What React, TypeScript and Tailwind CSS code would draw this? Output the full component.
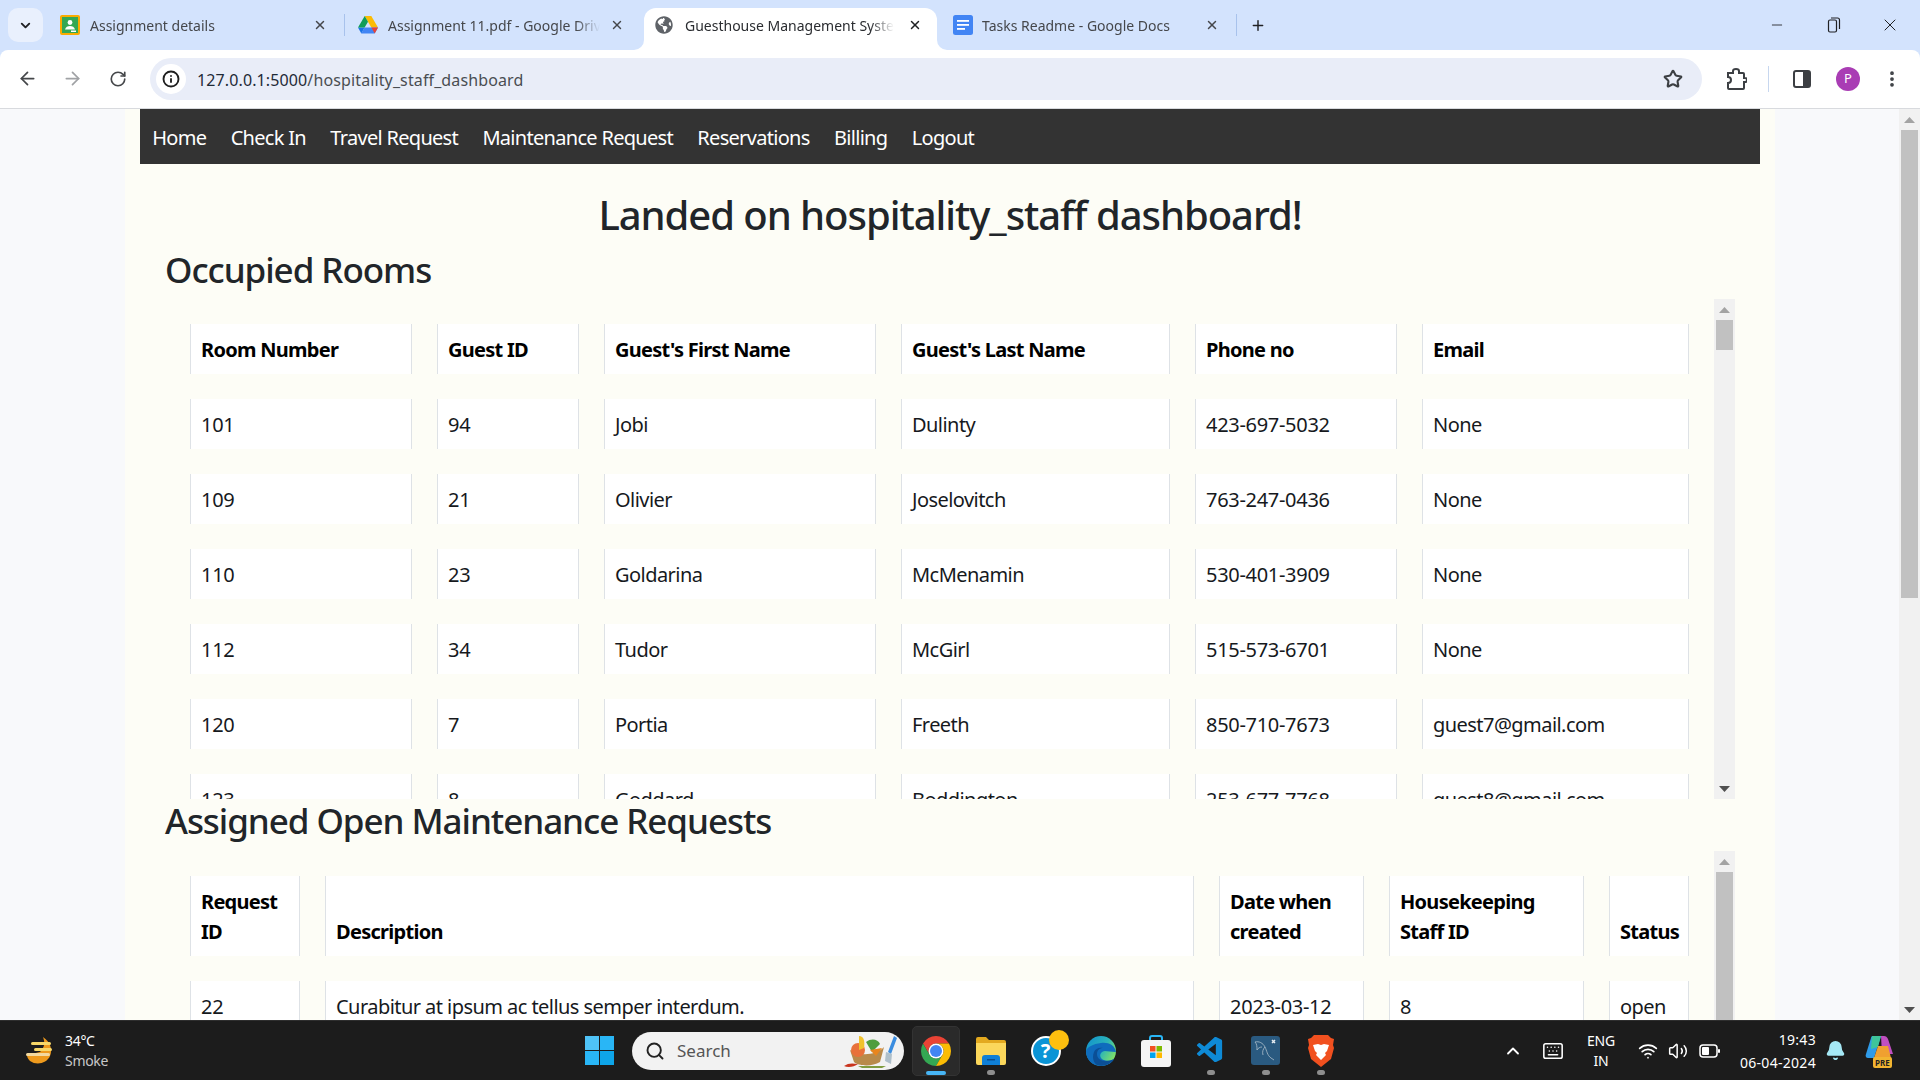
import React from 'react';
import { ArrowLeft, ArrowRight, RotateCw, Star, X, Plus, Minus, ChevronDown, ChevronUp, Search, Info, EllipsisVertical, Wifi, Volume2, Bell, Keyboard } from 'lucide-react';
import { FaGlobeAmericas } from 'react-icons/fa';
import { VscVscode } from 'react-icons/vsc';

const navItems = ['Home', 'Check In', 'Travel Request', 'Maintenance Request', 'Reservations', 'Billing', 'Logout'];

const occupiedHead = ['Room Number', 'Guest ID', "Guest's First Name", "Guest's Last Name", 'Phone no', 'Email'];
const occupiedRows = [
  ['101', '94', 'Jobi', 'Dulinty', '423-697-5032', 'None'],
  ['109', '21', 'Olivier', 'Joselovitch', '763-247-0436', 'None'],
  ['110', '23', 'Goldarina', 'McMenamin', '530-401-3909', 'None'],
  ['112', '34', 'Tudor', 'McGirl', '515-573-6701', 'None'],
  ['120', '7', 'Portia', 'Freeth', '850-710-7673', 'guest7@gmail.com'],
  ['123', '8', 'Goddard', 'Boddington', '253-677-7768', 'guest8@gmail.com'],
];

const requestHead = ['Request ID', 'Description', 'Date when created', 'Housekeeping Staff ID', 'Status'];
const requestRows = [['22', 'Curabitur at ipsum ac tellus semper interdum.', '2023-03-12', '8', 'open']];

function ChromeLogo({ size }: { size: number }) {
  return (
    <svg width={size} height={size} viewBox="4 4 40 40">
      <path d="M41.32 14A20 20 0 0 0 6.68 14L15.34 29A10 10 0 0 1 24 14Z" fill="#ea4335" />
      <path d="M6.68 14A20 20 0 0 0 24 44L32.66 29A10 10 0 0 1 15.34 29Z" fill="#34a853" />
      <path d="M24 44A20 20 0 0 0 41.32 14L24 14A10 10 0 0 1 32.66 29Z" fill="#fbbc04" />
      <circle cx="24" cy="24" r="10" fill="#fff" />
      <circle cx="24" cy="24" r="8" fill="#4285f4" />
    </svg>
  );
}

function ClassroomIcon() {
  return (
    <svg width="20" height="20" viewBox="0 0 20 20">
      <rect x="0" y="0" width="20" height="20" rx="2" fill="#f9ab00" />
      <rect x="2" y="2" width="16" height="16" fill="#34a853" />
      <circle cx="10" cy="7.5" r="2.4" fill="#fff" />
      <path d="M5 14.5c.6-2.6 2.6-3.6 5-3.6s4.4 1 5 3.6z" fill="#fff" />
      <rect x="11" y="15.5" width="5" height="1.5" fill="#fff" />
    </svg>
  );
}

function DriveIcon() {
  return (
    <svg width="20" height="18" viewBox="0 0 20 18">
      <polygon points="13.3,0 20,11.5 13.3,11.5 6.7,0" fill="#fbbc04" />
      <polygon points="3.3,17.5 16.7,17.5 20,11.5 6.6,11.5" fill="#4285f4" />
      <polygon points="6.6,11.5 0,11.5 3.3,17.5" fill="#1a73e8" />
      <polygon points="0,11.5 6.7,0 10,5.8 6.6,11.5" fill="#0f9d58" />
      <polygon points="13.4,11.5 20,11.5 16.7,17.5" fill="#ea4335" />
    </svg>
  );
}

function DocsIcon() {
  return (
    <svg width="20" height="20" viewBox="0 0 20 20">
      <rect x="0" y="0" width="20" height="20" rx="2.5" fill="#4285f4" />
      <rect x="4" y="5" width="12" height="1.8" fill="#fff" />
      <rect x="4" y="9" width="12" height="1.8" fill="#fff" />
      <rect x="4" y="13" width="8" height="1.8" fill="#fff" />
    </svg>
  );
}

function TabLabel({ text, active }: { text: string; active?: boolean }) {
  return (
    <span className={`flex-1 overflow-hidden whitespace-nowrap text-[14px] [mask-image:linear-gradient(to_left,transparent,black_24px)] ${active ? 'text-[#2a2c30]' : 'text-[#45474b]'}`}>
      {text}
    </span>
  );
}

function ChromeTabs() {
  return (
    <div className="flex h-[50px] items-end bg-[#d3e3fd]">
      <div className="mb-[8px] ml-[8px] flex h-[34px] w-[35px] items-center justify-center rounded-[10px] bg-[#e9f0fd]">
        <ChevronDown size={15} strokeWidth={3} className="text-[#202124]" />
      </div>
      <div className="flex h-[42px] w-[301px] items-center pb-[8px] pl-[17px] pr-[17px]">
        <ClassroomIcon />
        <span className="w-[10px]" />
        <TabLabel text="Assignment details" />
        <X size={14} strokeWidth={2.5} className="text-[#45474b]" />
      </div>
      <div className="mb-[14px] h-[22px] w-[1px] bg-[#a8c2ec]" />
      <div className="flex h-[42px] w-[299px] items-center pb-[8px] pl-[13px] pr-[20px]">
        <DriveIcon />
        <span className="w-[10px]" />
        <TabLabel text="Assignment 11.pdf - Google Drive" />
        <X size={14} strokeWidth={2.5} className="ml-[10px] text-[#45474b]" />
      </div>
      <div className="relative flex h-[42px] w-[293px] items-center rounded-t-[12px] bg-white pb-[8px] pl-[11px] pr-[15px]">
        <span className="absolute bottom-0 left-[-10px] h-[10px] w-[10px] bg-white">
          <span className="block h-full w-full rounded-br-[10px] bg-[#d3e3fd]" />
        </span>
        <FaGlobeAmericas size={18} className="text-[#5f6368]" />
        <span className="w-[12px]" />
        <TabLabel text="Guesthouse Management System" active />
        <X size={14} strokeWidth={2.5} className="ml-[14px] text-[#202124]" />
        <span className="absolute bottom-0 right-[-10px] h-[10px] w-[10px] bg-white">
          <span className="block h-full w-full rounded-bl-[10px] bg-[#d3e3fd]" />
        </span>
      </div>
      <div className="flex h-[42px] w-[299px] items-center pb-[8px] pl-[16px] pr-[17px]">
        <DocsIcon />
        <span className="w-[9px]" />
        <TabLabel text="Tasks Readme - Google Docs" />
        <X size={14} strokeWidth={2.5} className="text-[#45474b]" />
      </div>
      <div className="mb-[14px] h-[22px] w-[1px] bg-[#a8c2ec]" />
      <div className="mb-[16px] ml-[13px] flex h-[18px] w-[16px] items-center justify-center">
        <Plus size={17} strokeWidth={2.2} className="text-[#202124]" />
      </div>
      <div className="ml-auto flex h-[50px] items-center self-start">
        <div className="flex w-[56px] justify-center">
          <Minus size={16} strokeWidth={1.3} className="text-[#202124]" />
        </div>
        <div className="flex w-[57px] justify-center">
          <svg width="14" height="16" viewBox="0 0 14 16" fill="none" stroke="#202124" strokeWidth="1.2">
            <rect x="1.5" y="3" width="8" height="12" rx="1.5" />
            <path d="M4 1h6.5a2 2 0 0 1 2 2v9" />
          </svg>
        </div>
        <div className="flex w-[58px] justify-center pr-[2px]">
          <X size={20} strokeWidth={1.2} className="text-[#202124]" />
        </div>
      </div>
    </div>
  );
}

function ExtensionIcon() {
  return (
    <svg width="22" height="24" viewBox="0 0 22 24" fill="none" stroke="#3c3f43" strokeWidth="2" className="ml-[23px]">
      <path d="M3 6h5V4a3 2 0 0 1 6 0v2h4a1 1 0 0 1 1 1v4h1a1.5 1.5 0 0 1 0 4h-1v6a1 1 0 0 1-1 1H4a1 1 0 0 1-1-1v-5a3 3 0 0 0 0-6z" />
    </svg>
  );
}

function Toolbar() {
  return (
    <div className="flex h-[59px] items-center rounded-t-[8px] border-b border-[#d8dade] bg-white pb-[1px]">
      <ArrowLeft size={21} strokeWidth={2} className="ml-[17px] text-[#45474a]" />
      <ArrowRight size={21} strokeWidth={2} className="ml-[24px] text-[#a0a2a5]" />
      <RotateCw size={18} strokeWidth={2.2} className="ml-[26px] text-[#45474a]" />
      <div className="ml-[23px] flex h-[42px] w-[1552px] items-center rounded-full bg-[#e9edf8]">
        <div className="ml-[6px] flex h-[30px] w-[30px] items-center justify-center rounded-full bg-white">
          <Info size={18} strokeWidth={2.5} className="text-[#1f1f1f]" />
        </div>
        <span className="ml-[11px] pt-[2px] text-[16px] tracking-[0.12px] text-[#1f2a37]">
          127.0.0.1:5000<span className="text-[#4a4d52]">/hospitality_staff_dashboard</span>
        </span>
        <Star size={20} strokeWidth={2.5} className="ml-auto mr-[19px] text-[#3c3f43]" />
      </div>
      <ExtensionIcon />
      <div className="ml-[21px] h-[26px] w-[1px] bg-[#c7d7ef]" />
      <svg width="18" height="18" viewBox="0 0 18 18" className="ml-[24px]">
        <rect x="1" y="1" width="16" height="16" rx="2" fill="none" stroke="#3c3f43" strokeWidth="2" />
        <rect x="10" y="1" width="7" height="16" fill="#3c3f43" />
      </svg>
      <div className="ml-[25px] flex h-[24px] w-[24px] items-center justify-center rounded-full bg-[#a93db4] text-[13px] text-white">P</div>
      <EllipsisVertical size={20} strokeWidth={2.5} className="ml-[22px] text-[#3c3f43]" />
    </div>
  );
}

function ScrollArrow({ up, dark }: { up?: boolean; dark?: boolean }) {
  return (
    <svg width="11" height="6" viewBox="0 0 11 6" className={dark ? 'text-[#505050]' : 'text-[#a3a3a3]'}>
      <polygon points={up ? '5.5,0 11,6 0,6' : '0,0 11,0 5.5,6'} fill="currentColor" />
    </svg>
  );
}

function Scrollbar({ thumb }: { thumb: string }) {
  return (
    <div className="flex h-full w-[21px] shrink-0 flex-col items-center bg-[#f1f1f1]">
      <div className="flex h-[21px] items-center justify-center">
        <ScrollArrow up />
      </div>
      <div className={`w-[17px] bg-[#c1c1c1] ${thumb}`} />
      <div className="mt-auto flex h-[21px] items-center justify-center">
        <ScrollArrow dark />
      </div>
    </div>
  );
}

function DataTable({ head, rows, widths }: { head: string[]; rows: string[][]; widths: string[] }) {
  return (
    <table className="w-[1549px] shrink-0 self-start table-fixed border-separate border-spacing-[25px] text-[20px] leading-[30px] text-[#16191d]">
      <colgroup>
        {widths.map((w) => (
          <col key={w} className={w} />
        ))}
      </colgroup>
      <thead>
        <tr>
          {head.map((h) => (
            <th key={h} className="border-x border-[#dee2e6] bg-white px-[10px] pb-[9px] pt-[11px] text-left align-bottom font-bold tracking-[-0.72px] text-black">
              {h}
            </th>
          ))}
        </tr>
      </thead>
      <tbody>
        {rows.map((row) => (
          <tr key={row[0]}>
            {row.map((c, i) => (
              <td
                key={i}
                className={`border-x border-[#dee2e6] bg-white px-[10px] pb-[9px] pt-[11px] ${/^[\d-]+$/.test(c) ? 'tracking-[-0.3px]' : 'tracking-[-0.55px]'}`}
              >
                {c}
              </td>
            ))}
          </tr>
        ))}
      </tbody>
    </table>
  );
}

function PageContent() {
  return (
    <div className="flex min-w-0 flex-1 overflow-hidden bg-[#f8f9fb]">
      <div className="ml-[125px] h-full w-[1650px] overflow-hidden bg-[#fdfdf6] px-[15px]">
        <nav className="flex h-[55px] bg-[#333333]">
          {navItems.map((item) => (
            <a key={item} className="px-[12.2px] pb-[11.5px] pt-[13.5px] text-[20px] leading-[30px] tracking-[-0.7px] text-white">
              {item}
            </a>
          ))}
        </nav>
        <h1 className="mb-[9px] mt-[27px] text-center text-[40px] font-medium leading-[48px] tracking-[-1.05px] text-[#212529]">
          Landed on hospitality_staff dashboard!
        </h1>
        <div className="px-[25px]">
          <h2 className="mb-[8px] text-[35px] font-medium leading-[43px] tracking-[-1.05px] text-[#212529]">Occupied Rooms</h2>
          <div className="flex h-[500px] w-[1570px] overflow-hidden">
            <DataTable
              head={occupiedHead}
              rows={occupiedRows}
              widths={['w-[222px]', 'w-[142px]', 'w-[272px]', 'w-[269px]', 'w-[202px]', 'w-[267px]']}
            />
            <Scrollbar thumb="h-[30px]" />
          </div>
          <h2 className="mb-[9px] text-[35px] font-medium leading-[43px] tracking-[-1.05px] text-[#212529]">Assigned Open Maintenance Requests</h2>
          <div className="flex h-[500px] w-[1570px] overflow-hidden">
            <DataTable
              head={requestHead}
              rows={requestRows}
              widths={['w-[110px]', 'w-[869px]', 'w-[145px]', 'w-[195px]', 'w-[80px]']}
            />
            <Scrollbar thumb="h-[300px]" />
          </div>
        </div>
      </div>
    </div>
  );
}

function WeatherIcon() {
  return (
    <svg width="30" height="30" viewBox="0 0 30 30">
      <path d="M18 1C25 6 28 13 25 20 22 27 12 30 5 25 3 23 2 21 2 19L15 16C20 11 20 6 18 1Z" fill="#ee9a1d" />
      <rect x="6" y="6" width="20" height="3" rx="1.5" fill="#f7d768" />
      <rect x="9" y="12" width="18" height="3" rx="1.5" fill="#f7d768" />
      <rect x="1" y="17" width="24" height="3" rx="1.5" fill="#f3d9a0" />
    </svg>
  );
}

function WindowsLogo() {
  return (
    <svg width="29" height="29" viewBox="0 0 29 29">
      <rect x="0" y="0" width="14" height="14" fill="#4fc3f7" />
      <rect x="15" y="0" width="14" height="14" fill="#29b6f6" />
      <rect x="0" y="15" width="14" height="14" fill="#29b6f6" />
      <rect x="15" y="15" width="14" height="14" fill="#0ea5e9" />
    </svg>
  );
}

function BasketPicture() {
  return (
    <svg width="62" height="38" viewBox="0 0 62 38">
      <path d="M8 18C16 24 34 24 42 15L38 30C30 35 16 34 12 30Z" fill="#b88a4a" />
      <circle cx="16" cy="18" r="7" fill="#e8713a" />
      <path d="M17 4c5 0 6 5 5 12l-5 2z" fill="#f0c22c" />
      <path d="M24 10c5-4 12-3 14 2l-8 8z" fill="#4f9e3f" />
      <path d="M28 18l12-2-6 8z" fill="#e8851e" />
      <path d="M52 4l3 2-6 16-3-2z" fill="#3b8de0" />
      <path d="M44 20l6 2-1 10-6-3z" fill="#aebfca" />
      <path d="M2 34c4-3 8-3 14-2-4 3-10 4-14 2z" fill="#c9351f" />
      <path d="M16 34h28l-4 2H20z" fill="#7f9b3d" />
    </svg>
  );
}

function HelpIcon() {
  return (
    <div className="relative flex h-[30px] w-[30px] items-center justify-center rounded-full border-2 border-white bg-[#0a94d6] text-[20px] font-bold leading-none text-white">
      ?
      <span className="absolute right-[-10px] top-[-8px] h-[20px] w-[20px] rounded-full bg-[#fdbf0f]" />
    </div>
  );
}

function EdgeIcon() {
  return (
    <svg width="30" height="30" viewBox="0 0 30 30">
      <defs>
        <linearGradient id="edgeTop" x1="0" y1="0" x2="1" y2="0.6">
          <stop offset="0" stopColor="#0f8fd1" />
          <stop offset="0.6" stopColor="#2bb4b8" />
          <stop offset="1" stopColor="#7de06a" />
        </linearGradient>
      </defs>
      <circle cx="15" cy="15" r="15" fill="url(#edgeTop)" />
      <path d="M0 15C0 24 7 30 15 30c6 0 11-3 13-7-5 3-11 2-13-1-2-3 0-7 4-7 3 0 6 1 11 1C29 9 22 6 15 7 7 8 1 11 0 15Z" fill="#0f6cbd" />
      <path d="M11 29c-4-3-5-8-3-13 1-3 5-5 9-4-3 0-6 2-6 6 0 4 3 7 9 7 3 0 6-1 8-2-3 5-10 8-17 6Z" fill="#0b4f96" />
    </svg>
  );
}

function StoreIcon() {
  return (
    <svg width="30" height="32" viewBox="0 0 30 32">
      <path d="M9 6V3a2 2 0 0 1 2-2h8a2 2 0 0 1 2 2v3" fill="none" stroke="#29b6f6" strokeWidth="2" />
      <rect x="0" y="5" width="30" height="27" rx="3" fill="#f5f5f5" />
      <rect x="9" y="11" width="5.5" height="5.5" fill="#f25022" />
      <rect x="15.5" y="11" width="5.5" height="5.5" fill="#7fba00" />
      <rect x="9" y="17.5" width="5.5" height="5.5" fill="#00a4ef" />
      <rect x="15.5" y="17.5" width="5.5" height="5.5" fill="#ffb900" />
    </svg>
  );
}

function MysqlIcon() {
  return (
    <svg width="29" height="29" viewBox="0 0 29 29" fill="none" stroke="#aebfcc" strokeWidth="0.8">
      <rect x="0" y="0" width="29" height="29" rx="3" fill="#2a5a80" stroke="none" />
      <path d="M4 6c4-1 8 1 10 5s2 8 6 11l3 2M14 11c-2 2-3 5-2 8M4 6c2 2 2 5 2 8M6 14c1-2 3-3 5-3" />
      <path d="M21 7l3-3M24 7l-3-3" stroke="#e5ecf1" strokeWidth="1.5" />
    </svg>
  );
}

function BraveIcon() {
  return (
    <svg width="26" height="32" viewBox="0 0 26 32">
      <path d="M6 0h14l3 3 3 1-1 6 1 3-3 11-10 8-10-8L0 13l1-3-1-6 3-1z" fill="#f1501f" />
      <path d="M5 10l5-1 3 1 3-1 5 1-2 6-2 2 1 2-5 5-5-5 1-2-2-2z" fill="#fff" />
    </svg>
  );
}

function CopilotIcon() {
  return (
    <div className="relative h-[34px] w-[30px]">
      <svg width="30" height="26" viewBox="0 0 30 26">
        <path d="M7 2h9l-7 22H3C1 24 0 22 1 20L6 4c0-1 1-2 1-2z" fill="#2f9be8" />
        <path d="M16 2h3c2 0 3 1 4 3l5 15-11 0z" fill="#c04fc0" />
        <path d="M7 2h9l-3 11-7 2z" fill="#3fc49a" />
        <path d="M13 12h10l3 12H9z" fill="#f0a030" />
      </svg>
      <span className="absolute bottom-0 left-[8px] rounded-[2px] bg-[#f2b531] px-[2px] text-[8px] font-bold leading-[11px] text-[#222]">PRE</span>
    </div>
  );
}

function AppSlot({ children, dot, active }: { children: React.ReactNode; dot?: boolean; active?: boolean }) {
  return (
    <div className="relative flex h-[50px] w-[55px] items-center justify-center">
      {active && <div className="absolute left-[4px] h-[50px] w-[48px] rounded-[5px] border border-[#333] bg-[#2a2a2a]" />}
      <div className="relative">{children}</div>
      {dot && <span className="absolute bottom-[1px] h-[5px] w-[8px] rounded-full bg-[#8e8e8e]" />}
      {active && <span className="absolute bottom-[1px] h-[4px] w-[20px] rounded-full bg-[#47b5f5]" />}
    </div>
  );
}

function Taskbar() {
  return (
    <div className="flex h-[60px] shrink-0 items-center border-t border-[#2e2e2e] bg-[#1c1c1c] text-white">
      <div className="ml-[25px] flex w-[40px]">
        <WeatherIcon />
      </div>
      <div className="w-[520px] text-[14px] leading-[20px] tracking-[-0.3px]">
        <div>34°C</div>
        <div className="text-[#c8c8c8]">Smoke</div>
      </div>
      <WindowsLogo />
      <div className="ml-[18px] flex h-[38px] w-[272px] items-center rounded-full bg-[#f2f2f2]">
        <Search size={20} strokeWidth={2.3} className="ml-[13px] text-[#222]" />
        <span className="ml-[12px] text-[17px] text-[#555]">Search</span>
        <span className="ml-auto">
          <BasketPicture />
        </span>
      </div>
      <div className="ml-[4px] flex items-center">
        <AppSlot active>
          <ChromeLogo size={30} />
        </AppSlot>
        <AppSlot dot>
          <svg width="30" height="28" viewBox="0 0 30 28">
            <path d="M0 2a2 2 0 0 1 2-2h8l3 3h15a2 2 0 0 1 2 2v3H0z" fill="#e3a91f" />
            <path d="M0 6h30v20a2 2 0 0 1-2 2H2a2 2 0 0 1-2-2z" fill="#fbd75b" />
            <path d="M6 21a3 3 0 0 1 3-3h12a3 3 0 0 1 3 3v7H6z" fill="#0f7fd6" />
            <rect x="11" y="22" width="8" height="1.5" fill="#0a4f91" />
          </svg>
        </AppSlot>
        <AppSlot>
          <HelpIcon />
        </AppSlot>
        <AppSlot>
          <EdgeIcon />
        </AppSlot>
        <AppSlot>
          <StoreIcon />
        </AppSlot>
        <AppSlot dot>
          <VscVscode size={31} className="text-[#0e8ad6]" />
        </AppSlot>
        <AppSlot dot>
          <MysqlIcon />
        </AppSlot>
        <AppSlot dot>
          <BraveIcon />
        </AppSlot>
      </div>
      <div className="ml-[150px] flex w-[30px] justify-center">
        <ChevronUp size={20} strokeWidth={2.2} />
      </div>
      <div className="flex w-[50px] justify-center">
        <Keyboard size={22} strokeWidth={1.7} />
      </div>
      <div className="w-[46px] text-center text-[14px] leading-[20px] tracking-[-0.2px]">
        <div>ENG</div>
        <div>IN</div>
      </div>
      <div className="ml-[9px] flex w-[30px] justify-center">
        <Wifi size={20} strokeWidth={2} />
      </div>
      <div className="flex w-[30px] justify-center">
        <Volume2 size={20} strokeWidth={1.8} />
      </div>
      <div className="flex w-[32px] justify-center">
        <svg width="21" height="14" viewBox="0 0 21 14">
          <rect x="1" y="1" width="17" height="12" rx="3" fill="none" stroke="#fff" strokeWidth="1.5" />
          <rect x="3" y="3" width="7" height="8" rx="1" fill="#fff" />
          <rect x="19" y="5" width="2" height="4" rx="1" fill="#fff" />
        </svg>
      </div>
      <div className="w-[91px] text-right text-[14px] leading-[23px] tracking-[0.3px]">
        <div>19:43</div>
        <div>06-04-2024</div>
      </div>
      <div className="ml-[7px] flex w-[24px] justify-center">
        <Bell size={21} fill="#a5e8f5" stroke="#a5e8f5" />
      </div>
      <div className="ml-[18px]">
        <CopilotIcon />
      </div>
    </div>
  );
}

export default function App() {
  return (
    <div className="flex h-screen w-[1920px] flex-col overflow-hidden bg-[#d3e3fd] font-['Noto_Sans',sans-serif]">
      <ChromeTabs />
      <Toolbar />
      <div className="flex min-h-0 flex-1">
        <PageContent />
        <Scrollbar thumb="h-[468px]" />
      </div>
      <Taskbar />
    </div>
  );
}
